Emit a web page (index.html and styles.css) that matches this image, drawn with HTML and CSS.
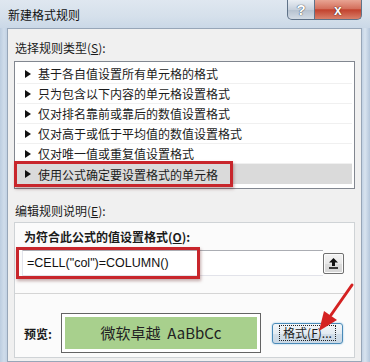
FILE: index.html
```html
<!DOCTYPE html>
<html lang="zh-CN">
<head>
  <meta charset="UTF-8">
  <title>新建格式规则</title>
  <link rel="stylesheet" href="styles.css">
</head>
<body>
  <div class="window">
    <div class="titlebar">
      <span class="title">新建格式规则</span>
      <div class="controls">
        <span class="btn-help">?</span>
        <span class="btn-close">x</span>
      </div>
    </div>

    <div class="client">
      <div class="section-label">选择规则类型(<u>S</u>):</div>
      <div class="rule-list">
        <div class="rule">基于各自值设置所有单元格的格式</div>
        <div class="rule">只为包含以下内容的单元格设置格式</div>
        <div class="rule">仅对排名靠前或靠后的数值设置格式</div>
        <div class="rule">仅对高于或低于平均值的数值设置格式</div>
        <div class="rule">仅对唯一值或重复值设置格式</div>
        <div class="rule selected">使用公式确定要设置格式的单元格</div>
      </div>

      <div class="section-label second">编辑规则说明(<u>E</u>):</div>
      <div class="edit-panel">
        <div class="panel-title">为符合此公式的值设置格式(<u>O</u>):</div>
        <div class="formula-row">
          <div class="formula">=CELL("col")=COLUMN()</div>
          <span class="pick-btn">
            <svg width="11" height="12" viewBox="0 0 11 12">
              <path d="M5.5 1 L10 5.5 L7 5.5 L7 9 L4 9 L4 5.5 L1 5.5 Z" fill="#111"/>
              <rect x="1" y="10.2" width="9" height="1.6" fill="#111"/>
            </svg>
          </span>
        </div>
        <div class="separator"></div>
        <div class="preview-row">
          <span class="preview-label">预览:</span>
          <div class="preview-box">
            <div class="preview-fill">微软卓越&nbsp; AaBbCc</div>
          </div>
          <span class="format-btn"><span class="focus">格式(<u>F</u>)...</span></span>
        </div>
      </div>
    </div>

    <svg class="annot-arrow" width="60" height="70" viewBox="0 0 60 70">
      <line x1="50" y1="3" x2="29" y2="33" stroke="#d42222" stroke-width="3" stroke-linecap="round"/>
      <path d="M17 49 L22 29 L35 38 Z" fill="#d42222"/>
    </svg>
  </div>
</body>
</html>
```

FILE: styles.css
```css
body {
  margin: 0;
  padding: 0;
  background: #fff;
}
.window {
  position: relative;
  width: 370px;
  height: 362px;
  overflow: hidden;
  background: linear-gradient(90deg, #bccde0 0, #cfdcea 4px, #c2d2e4 7px, #c2d2e4 362px, #d8e3ef 365px, #b5c7dc 370px);
  font-family: "Noto Sans CJK SC", "Liberation Sans", sans-serif;
  font-size: 12px;
  color: #1b1b1b;
}
.titlebar {
  display: flex;
  align-items: flex-start;
  height: 28px;
  background: linear-gradient(180deg, #dfe7f0 0, #d5e0eb 60%, #cad8e7 100%);
}
.title {
  padding: 7px 0 0 8px;
  line-height: 16px;
  color: #111;
}
.controls {
  display: flex;
  margin-left: auto;
  margin-right: 8px;
}
.btn-help,
.btn-close {
  display: flex;
  align-items: center;
  justify-content: center;
  height: 19px;
  border: 1px solid #5f7288;
  border-top: none;
  font-family: "Liberation Sans", sans-serif;
  font-weight: bold;
  color: #fff;
}
.btn-help {
  width: 26px;
  border-radius: 0 0 0 5px;
  background: linear-gradient(180deg, #e9eef4 0, #c6d0dc 50%, #b4c0ce 51%, #d3dbe4 100%);
  font-size: 15px;
  text-shadow: 0 0 1px #3a4654, 0 0 1px #3a4654;
}
.btn-close {
  width: 46px;
  border-left: none;
  border-radius: 0 0 5px 0;
  background: linear-gradient(180deg, #e8a493 0, #d4705d 45%, #c2422e 52%, #d9806a 100%);
  font-size: 14px;
  text-shadow: 0 0 1px #4a1a10, 0 0 1px #4a1a10;
}

.client {
  height: 332px;
  margin: 0 8px 0 7px;
  padding: 0 6px;
  background: #f0f0f0;
  border: 1px solid #97a6b8;
}
.section-label {
  margin-top: 11px;
  line-height: 16px;
  height: 16px;
  padding-left: 1px;
}
.section-label.second {
  margin-top: 14px;
}
.rule-list {
  margin-top: 5px;
  height: 122px;
  padding: 2px;
  background: #fff;
  border: 1px solid #828790;
}
.rule {
  position: relative;
  display: flex;
  align-items: center;
  height: 19px;
  padding-left: 8px;
  border-bottom: 1px solid #f0f0f0;
}
.rule::before {
  content: "";
  width: 0;
  height: 0;
  margin-right: 7px;
  border-top: 4px solid transparent;
  border-bottom: 4px solid transparent;
  border-left: 6px solid #111;
}
.rule.selected {
  height: 20px;
  border-bottom: none;
  background: #dadada;
}
.rule.selected::after {
  content: "";
  position: absolute;
  left: -3px;
  top: -3px;
  width: 213px;
  height: 20px;
  border: 3px solid #c8262c;
  box-shadow: 1px 2px 3px rgba(90, 20, 20, 0.35);
}

.edit-panel {
  margin-top: 3px;
  height: 134px;
  padding: 0 10px 0 7px;
  background: #fbfbfb;
  border: 1px solid #cfd3d6;
}
.panel-title {
  margin: 6px 0 0 2px;
  line-height: 16px;
  font-weight: bold;
}
.formula-row {
  position: relative;
  display: flex;
  align-items: center;
  margin-top: 5px;
  height: 26px;
}
.formula-row::after {
  content: "";
  position: absolute;
  left: -6px;
  top: -3px;
  width: 178px;
  height: 26px;
  border: 3px solid #c8262c;
  box-shadow: 1px 2px 3px rgba(90, 20, 20, 0.35);
}
.formula {
  flex: 1;
  height: 24px;
  line-height: 24px;
  padding-left: 4px;
  background: #fff;
  border: 1px solid #e2e3ea;
  border-top-color: #abadb3;
  border-right: none;
  font-family: "Liberation Sans", sans-serif;
  font-size: 12.5px;
  color: #111;
}
.pick-btn {
  display: flex;
  align-items: center;
  justify-content: center;
  width: 19px;
  height: 19px;
  border: 1px solid #707070;
  border-radius: 2px;
  background: linear-gradient(180deg, #f4f4f4 0, #e8e8e8 50%, #dcdcdc 51%, #d6d6d6 100%);
  box-shadow: inset 0 0 0 1px #fbfbfb;
}
.separator {
  height: 1px;
  margin: 17px 0 0 -7px;
  background: #d5d5d5;
}
.preview-row {
  display: flex;
  align-items: center;
  margin-top: 19px;
}
.preview-label {
  width: 37px;
  margin-left: 2px;
  font-weight: bold;
}
.preview-box {
  width: 192px;
  height: 32px;
  padding: 3px;
  background: #fff;
  border: 1px solid #646464;
}
.preview-fill {
  height: 32px;
  line-height: 32px;
  text-align: center;
  background: #a8d08d;
  font-size: 15px;
  color: #222;
}
.format-btn {
  display: flex;
  align-items: center;
  justify-content: center;
  width: 69px;
  height: 19px;
  margin-left: 11px;
  border: 1px solid #4a8ab8;
  border-radius: 3px;
  background: linear-gradient(180deg, #f2f6f9 0, #e3ebf2 50%, #d3dfea 51%, #c9d8e5 100%);
  box-shadow: 0 0 2px #8cc0e2;
}
.format-btn .focus {
  padding: 0 3px;
  line-height: 14px;
  outline: 1px dotted #222;
}

.annot-arrow {
  position: absolute;
  left: 302px;
  top: 282px;
}
```
